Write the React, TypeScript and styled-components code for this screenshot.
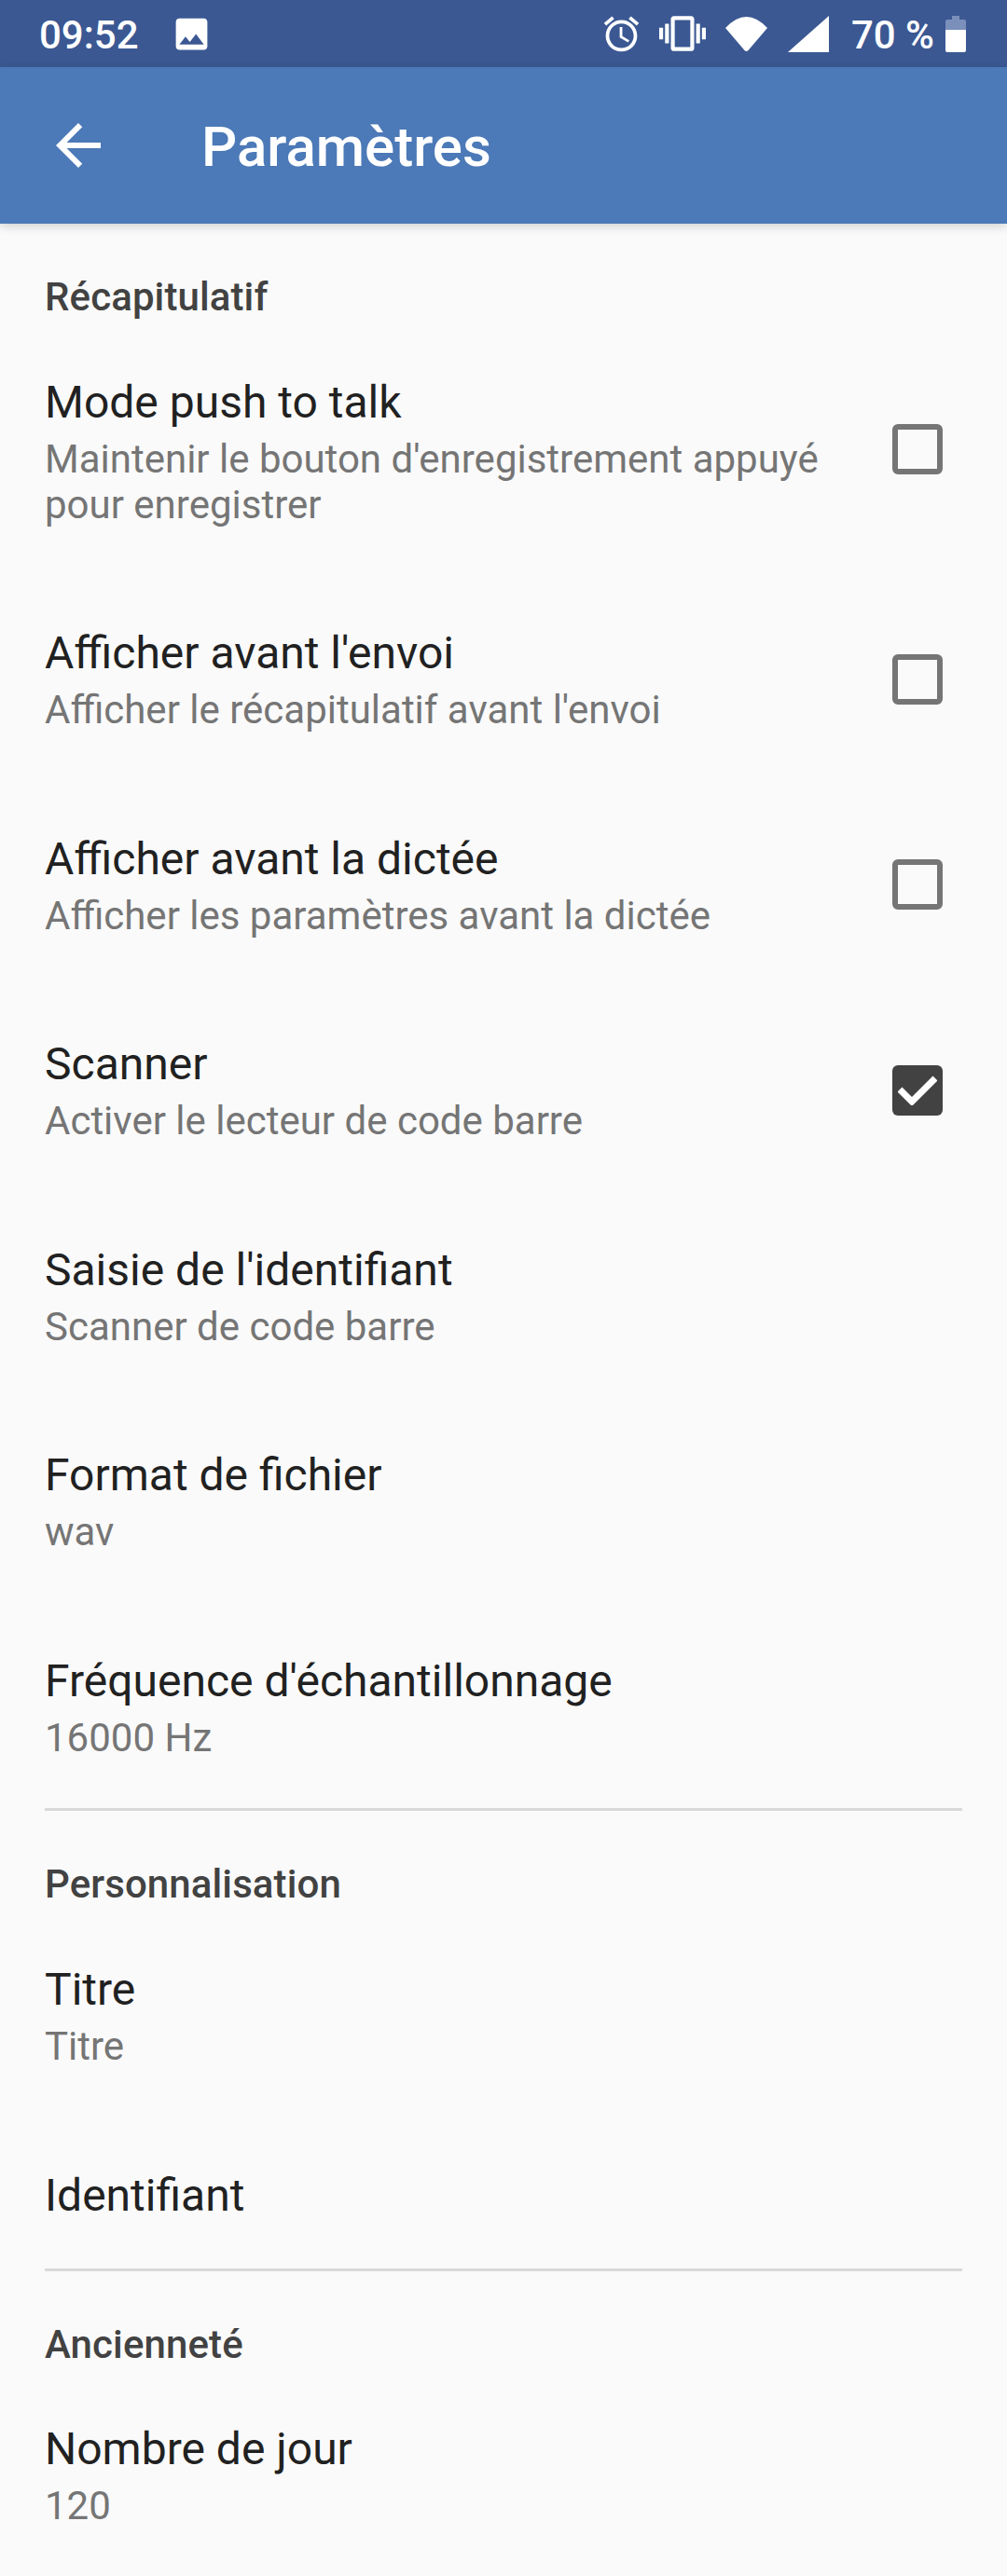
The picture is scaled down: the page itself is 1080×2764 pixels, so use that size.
import styled, { createGlobalStyle } from "styled-components";

const GlobalStyle = createGlobalStyle`
  html, body {
    margin: 0;
    padding: 0;
    background: #fafafa;
  }
  body {
    font-family: "Roboto", "Liberation Sans", sans-serif;
  }
`;

const Page = styled.div`
  width: 1080px;
  height: 2764px;
  overflow: hidden;
  background: #fafafa;
`;

const StatusBar = styled.div`
  height: 72px;
  padding: 0 44px 0 42px;
  box-sizing: border-box;
  display: flex;
  align-items: center;
  justify-content: space-between;
  background: #3b5893;
  color: #fff;
  font-size: 42px;
  line-height: 72px;
`;

const StatusGroup = styled.div`
  display: flex;
  align-items: center;
`;

const Clock = styled.span`
  width: 141px;
  padding-top: 3px;
  font-weight: 500;
`;

const Level = styled.span`
  margin: 0 12px 0 24px;
  padding-top: 3px;
  font-weight: 500;
`;

const StatusIcon = styled.svg<{ $gap?: number }>`
  display: block;
  flex: none;
  margin-left: ${(p) => p.$gap ?? 0}px;
  fill: #fff;
`;

const Toolbar = styled.header`
  position: relative;
  z-index: 1;
  height: 168px;
  display: flex;
  align-items: center;
  padding-left: 48px;
  background: #4c79b7;
  box-shadow: 0 3px 10px rgba(0, 0, 0, 0.16);
`;

const BackIcon = styled.svg`
  display: block;
  width: 72px;
  height: 72px;
  fill: #fff;
`;

const Title = styled.h1`
  margin: 4px 0 0 96px;
  color: #fff;
  font-size: 60px;
  font-weight: 500;
  line-height: 70px;
`;

const SectionTitle = styled.h2`
  margin: 0;
  padding: 54px 48px 4.5px;
  color: #424242;
  font-size: 42px;
  font-weight: 500;
  letter-spacing: 0.1px;
  line-height: 49px;
`;

const Rule = styled.hr`
  height: 3px;
  margin: 0 48px;
  border: 0;
  background: #d9d9d9;
`;

const Row = styled.div`
  display: flex;
  align-items: center;
  padding: 56px 48px 51.5px;
`;

const RowText = styled.div`
  flex: 1;
  min-width: 0;
  padding-right: 48px;
`;

const RowTitle = styled.div`
  color: #212121;
  font-size: 48px;
  line-height: 56px;

  &:only-child {
    padding-top: 1px;
    margin-bottom: -2px;
  }
`;

const RowSummary = styled.div`
  margin-top: 8px;
  color: #757575;
  font-size: 42px;
  line-height: 49px;
`;

const Box = styled.span<{ $checked?: boolean; $raised?: boolean }>`
  flex: none;
  width: 54px;
  height: 54px;
  margin-right: 21px;
  margin-bottom: ${(p) => (p.$raised ? "6px" : "2px")};
  box-sizing: border-box;
  display: flex;
  align-items: center;
  justify-content: center;
  border-radius: 6px;
  border: ${(p) => (p.$checked ? "none" : "6px solid #757575")};
  background: ${(p) => (p.$checked ? "#424242" : "transparent")};
`;

const Tick = styled.svg`
  display: block;
  width: 42px;
  height: 32px;
  fill: none;
  stroke: #fff;
  stroke-width: 7;
`;

type PrefProps = {
  title: string;
  summary?: string;
  check?: "on" | "off";
  raised?: boolean;
};

const Pref = ({ title, summary, check, raised }: PrefProps) => (
  <Row>
    <RowText>
      <RowTitle>{title}</RowTitle>
      {summary && <RowSummary>{summary}</RowSummary>}
    </RowText>
    {check && (
      <Box $checked={check === "on"} $raised={raised}>
        {check === "on" && (
          <Tick viewBox="0 0 42 32">
            <path d="M2 15 L15 28 L40 3" />
          </Tick>
        )}
      </Box>
    )}
  </Row>
);

const App = () => {
  return (
    <Page>
      <GlobalStyle />
      <StatusBar>
        <StatusGroup>
          <Clock>09:52</Clock>
          <StatusIcon width="45" height="45" viewBox="0 0 24 24">
            <path d="M21 19V5c0-1.1-.9-2-2-2H5c-1.1 0-2 .9-2 2v14c0 1.1.9 2 2 2h14c1.1 0 2-.9 2-2zM8.5 13.5l2.5 3.01L14.5 12l4.5 6H5l3.5-4.5z" />
          </StatusIcon>
        </StatusGroup>
        <StatusGroup>
          <StatusIcon width="45" height="45" viewBox="0 0 24 24">
            <path d="M22 5.72l-4.6-3.86-1.29 1.53 4.6 3.86L22 5.72zM7.88 3.39L6.6 1.86 2 5.71l1.29 1.53 4.59-3.85zM12.5 8H11v6l4.75 2.85.75-1.23-4-2.37V8zM12 4c-4.97 0-9 4.03-9 9s4.03 9 9 9 9-4.03 9-9-4.03-9-9-9zm0 16c-3.87 0-7-3.13-7-7s3.13-7 7-7 7 3.13 7 7-3.13 7-7 7z" />
          </StatusIcon>
          <StatusIcon $gap={18} width="50" height="50" viewBox="0 0 24 24">
            <path d="M0 15h2V9H0v6zm3 2h2V7H3v10zm19-8v6h2V9h-2zm-3 8h2V7h-2v10zM16.5 3h-9C6.67 3 6 3.67 6 4.5v15c0 .83.67 1.5 1.5 1.5h9c.83 0 1.5-.67 1.5-1.5v-15c0-.83-.67-1.5-1.5-1.5zM16 19H8V5h8v14z" />
          </StatusIcon>
          <StatusIcon $gap={21} width="45" height="37" viewBox="0 0 45 37">
            <path d="M0 12 Q22.5 -12 45 12 L24.5 36 Q22.5 38 20.5 36 Z" />
          </StatusIcon>
          <StatusIcon $gap={22} width="44" height="39" viewBox="0 0 44 39">
            <path d="M0 39 H44 V0 Z" />
          </StatusIcon>
          <Level>70 %</Level>
          <StatusIcon width="22" height="39" viewBox="0 0 22 39">
            <path fill="#7b8fbb" d="M7 0h8v4h5q2 0 2 2v9H0V6q0-2 2-2h5z" />
            <path d="M0 15h22v22q0 2-2 2H2q-2 0-2-2z" />
          </StatusIcon>
        </StatusGroup>
      </StatusBar>

      <Toolbar>
        <BackIcon viewBox="0 0 24 24">
          <path d="M20 11H7.83l5.59-5.59L12 4l-8 8 8 8 1.41-1.41L7.83 13H20v-2z" />
        </BackIcon>
        <Title>Paramètres</Title>
      </Toolbar>

      <SectionTitle>Récapitulatif</SectionTitle>
      <Pref
        title="Mode push to talk"
        summary="Maintenir le bouton d'enregistrement appuyé pour enregistrer"
        check="off"
        raised
      />
      <Pref title="Afficher avant l'envoi" summary="Afficher le récapitulatif avant l'envoi" check="off" />
      <Pref title="Afficher avant la dictée" summary="Afficher les paramètres avant la dictée" check="off" />
      <Pref title="Scanner" summary="Activer le lecteur de code barre" check="on" />
      <Pref title="Saisie de l'identifiant" summary="Scanner de code barre" />
      <Pref title="Format de fichier" summary="wav" />
      <Pref title="Fréquence d'échantillonnage" summary="16000 Hz" />
      <Rule />

      <SectionTitle>Personnalisation</SectionTitle>
      <Pref title="Titre" summary="Titre" />
      <Pref title="Identifiant" />
      <Rule />

      <SectionTitle>Ancienneté</SectionTitle>
      <Pref title="Nombre de jour" summary="120" />
    </Page>
  );
};

export default App;
